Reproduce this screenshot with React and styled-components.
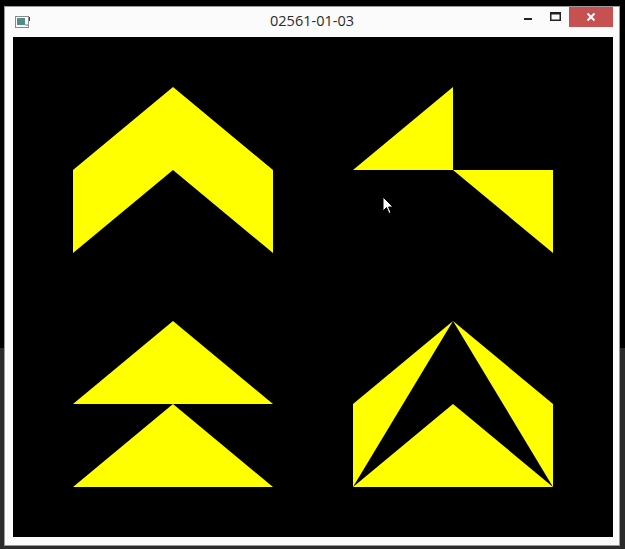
import styled, { createGlobalStyle } from 'styled-components';

const Global = createGlobalStyle`
    html, body {
        margin: 0;
        padding: 0;
        background: #000;
    }
    body {
        font-family: "Open Sans", "Noto Sans", sans-serif;
    }
`;

const Desktop = styled.div`
    width: 625px;
    height: 549px;
    overflow: hidden;
    background: linear-gradient(to bottom, #000 0, #000 348px, #2b2b2b 348px, #2b2b2b 100%);
    padding: 6px 0 0 4px;
    box-sizing: border-box;
`;

const Window = styled.div`
    width: 616px;
    height: 540px;
    box-sizing: border-box;
    border: 1px solid #9a9a9a;
    background: #fbfbfb;
    display: flex;
    flex-direction: column;
`;

const TitleBar = styled.div`
    height: 30px;
    display: flex;
    align-items: flex-start;
    position: relative;
`;

const AppIcon = styled.div`
    height: 30px;
    margin-left: 10px;
    display: flex;
    align-items: center;
`;

const Title = styled.div`
    position: absolute;
    left: 0;
    right: 0;
    top: 4px;
    text-align: center;
    font-size: 14.5px;
    color: #2b2b2b;
    pointer-events: none;
`;

const Controls = styled.div`
    margin-left: auto;
    margin-right: 6px;
    display: flex;
    z-index: 1;
`;

const CtrlButton = styled.div`
    width: ${p => p.$w}px;
    height: 20px;
    display: flex;
    align-items: center;
    justify-content: center;
    background: ${p => p.$bg || 'transparent'};
`;

const Body = styled.div`
    flex: 1;
    padding: 0 6px 8px 8px;
    display: flex;
`;

const Canvas = styled.div`
    width: 600px;
    height: 500px;
    background: #000;
    position: relative;
`;

const Cursor = styled.svg`
    position: absolute;
    left: 369px;
    top: 159px;
`;

const Y = '#ffff00';

export default function App() {
    return (
        <Desktop>
            <Global />
            <Window>
                <TitleBar>
                    <AppIcon>
                        <svg width="16" height="13" viewBox="0 0 16 13">
                            <rect x="0.5" y="0.5" width="13" height="11" fill="#fff" stroke="#8a8a8a" />
                            <rect x="2" y="2" width="8" height="7" fill="#4f8f86" />
                            <rect x="10" y="8" width="3" height="2" fill="#bbb" />
                            <rect x="14" y="1" width="1" height="4" fill="#444" />
                        </svg>
                    </AppIcon>
                    <Title>02561-01-03</Title>
                    <Controls>
                        <CtrlButton $w={27}>
                            <svg width="10" height="10" viewBox="0 0 10 10">
                                <rect x="1" y="6" width="8" height="2" fill="#222" />
                            </svg>
                        </CtrlButton>
                        <CtrlButton $w={28}>
                            <svg width="11" height="10" viewBox="0 0 11 10">
                                <rect x="0.75" y="0.75" width="9.5" height="7.5" fill="none" stroke="#222" strokeWidth="1.5" />
                                <rect x="0.5" y="0.5" width="10" height="2" fill="#222" />
                            </svg>
                        </CtrlButton>
                        <CtrlButton $w={44} $bg="#c75050">
                            <svg width="10" height="10" viewBox="0 0 10 10">
                                <path d="M1.5 1.5 L8.5 8.5 M8.5 1.5 L1.5 8.5" stroke="#fff" strokeWidth="2" />
                            </svg>
                        </CtrlButton>
                    </Controls>
                </TitleBar>
                <Body>
                    <Canvas>
                        <svg width="600" height="500" viewBox="0 0 600 500">
                            <polygon fill={Y} points="60,133 160,50 260,133 260,216 160,133 60,216" />
                            <polygon fill={Y} points="340,133 440,50 440,133" />
                            <polygon fill={Y} points="440,133 540,133 540,216" />
                            <polygon fill={Y} points="60,367 160,284 260,367" />
                            <polygon fill={Y} points="60,450 160,367 260,450" />
                            <polygon fill={Y} points="340,367 440,284 340,450" />
                            <polygon fill={Y} points="440,284 540,367 540,450" />
                            <polygon fill={Y} points="340,450 440,367 540,450" />
                        </svg>
                        <Cursor width="14" height="20" viewBox="0 0 14 20">
                            <path d="M1 1 L1 15 L4.5 11.5 L7 17.5 L9 16.6 L6.6 11 L11 11 Z" fill="#fff" stroke="#000" strokeWidth="1" strokeLinejoin="round" />
                        </Cursor>
                    </Canvas>
                </Body>
            </Window>
        </Desktop>
    );
}
